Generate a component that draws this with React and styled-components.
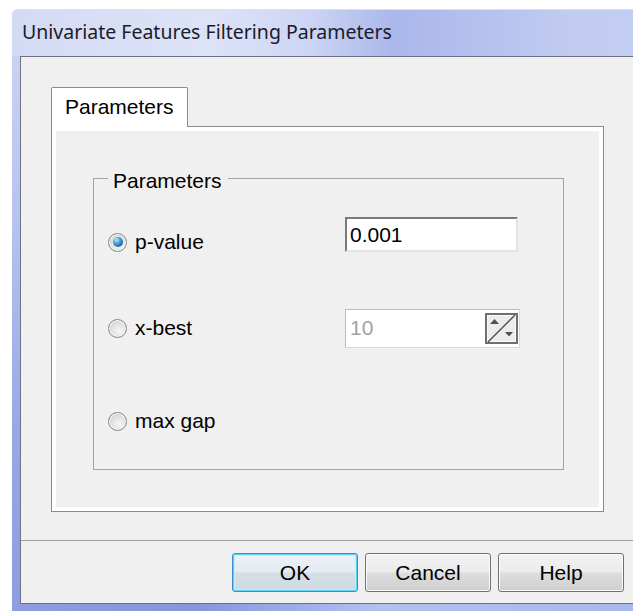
import React from 'react';
import styled, { createGlobalStyle } from 'styled-components';

const GlobalStyle = createGlobalStyle`
  html, body {
    margin: 0;
    padding: 0;
    background: #ffffff;
  }
  body {
    font-family: "Liberation Sans", Arial, sans-serif;
  }
  * {
    box-sizing: border-box;
  }
`;

const Desktop = styled.div`
  width: 633px;
  height: 611px;
  overflow: hidden;
  padding: 9px 0 0 12px;
  background: #ffffff;
`;

const Window = styled.div`
  width: 660px;
  height: 602px;
  display: flex;
  flex-direction: column;
  border-top-left-radius: 6px;
  background:
    linear-gradient(90deg, #8d9de0 0%, #8696dd 28%, #b3bfee 55%, #a9b6eb 100%) bottom / 100% 8px no-repeat,
    linear-gradient(180deg, #cfd7f3 0%, #b7c2ef 35%, #98a8e4 70%, #8c9de0 100%);
`;

const TitleBar = styled.div`
  flex: none;
  height: 47px;
  display: flex;
  align-items: center;
  padding: 0 0 3px 10px;
  border-top-left-radius: 6px;
  border-top: 1px solid #d9dff5;
  background: linear-gradient(90deg, #d3dbf4 0%, #dde3f7 30%, #ccd5f4 45%, #aab7ea 58%, #b4c0ee 70%, #c2ccf1 85%, #c4cef2 100%);
  color: #1b1b2b;
  font-family: "Noto Sans", "Open Sans", sans-serif;
  font-size: 19.5px;
`;

const Frame = styled.div`
  flex: 1;
  display: flex;
  padding: 0 0 7px 8px;
`;

const Client = styled.div`
  flex: 1;
  display: flex;
  flex-direction: column;
  background: #f0f0f0;
  border: 1px solid #6b7385;
  border-right: none;
`;

const TabArea = styled.div`
  padding: 30px 0 0 30px;
`;

const TabStrip = styled.div`
  display: flex;
`;

const Tab = styled.div`
  position: relative;
  z-index: 1;
  height: 40px;
  margin-bottom: -1px;
  padding: 0 13px;
  line-height: 38px;
  font-size: 21px;
  color: #000;
  background: #ffffff;
  border: 1px solid #898c95;
  border-bottom: none;
  border-radius: 2px 2px 0 0;
`;

const Panel = styled.div`
  width: 553px;
  height: 386px;
  padding: 4px;
  background: #ffffff;
  border: 1px solid #898c95;
`;

const Page = styled.div`
  height: 100%;
  padding: 33px 0 0 37px;
  background: #f0f0f0;
`;

const GroupBox = styled.fieldset`
  width: 471px;
  height: 306px;
  margin: 0;
  padding: 0 0 0 14px;
  border: 1px solid #a3a3a3;
  min-width: 0;
`;

const Legend = styled.legend`
  padding: 6px 6px 0 5px;
  line-height: 22px;
  font-size: 21px;
  color: #000;
`;

const Row = styled.div`
  display: flex;
  align-items: center;
  height: 40px;
  margin-top: ${p => p.$gap}px;
`;

const Choice = styled.label`
  width: 237px;
  display: flex;
  align-items: center;
  gap: 8px;
  font-size: 21px;
  color: #000;
`;

const Radio = styled.span`
  position: relative;
  width: 19px;
  height: 19px;
  flex: none;
  border-radius: 50%;
  border: 1px solid #85878a;
  background: radial-gradient(circle at 60% 65%, #f6f6f6 0%, #dedede 55%, #c2c2c2 100%);
  box-shadow: inset 0 0 0 1px #f8f8f8;

  &::after {
    content: '';
    display: ${p => (p.$checked ? 'block' : 'none')};
    position: absolute;
    left: 3.5px;
    top: 3.5px;
    width: 10px;
    height: 10px;
    border-radius: 50%;
    background: radial-gradient(circle at 35% 30%, #bfe8ff 0%, #49a6e0 35%, #1c5f9c 75%, #16426f 100%);
  }
`;

const TextBox = styled.div`
  align-self: flex-start;
  margin-top: -5px;
  width: 173px;
  height: 35px;
  padding-left: 3px;
  display: flex;
  align-items: center;
  font-size: 21px;
  color: #000;
  background: #ffffff;
  border: 2px solid;
  border-color: #7a7a7a #e3e3e3 #e3e3e3 #7a7a7a;
`;

const SpinBox = styled.div`
  width: 175px;
  height: 39px;
  display: flex;
  align-items: center;
  justify-content: space-between;
  padding: 0 1px 0 4px;
  font-size: 21px;
  color: #a3a3a3;
  background: #ffffff;
  border: 1px solid;
  border-color: #bcbcbc #d8d8d8 #d8d8d8 #bcbcbc;
`;

const Footer = styled.div`
  margin-top: auto;
  height: 63px;
  display: flex;
  gap: 7px;
  padding: 12px 0 0 211px;
  border-top: 1px solid #a0a0a0;
`;

const Button = styled.button`
  width: 126px;
  height: 39px;
  padding: 0;
  font-family: "Liberation Sans", Arial, sans-serif;
  font-size: 21px;
  color: #000;
  border-radius: 3px;
  border: 1px solid ${p => (p.$default ? '#3c8fc6' : '#707070')};
  background: ${p =>
    p.$default
      ? 'linear-gradient(180deg, #edf2f6 0%, #e4ebf1 48%, #d5dfe7 52%, #cfd9e2 100%)'
      : 'linear-gradient(180deg, #f3f3f3 0%, #ebebeb 48%, #dddddd 52%, #cfcfcf 100%)'};
  box-shadow: ${p =>
    p.$default ? 'inset 0 0 0 1px #5fd0f5, inset 0 0 0 2px #c6ecfa' : 'inset 0 0 0 1px #fbfbfb'};
`;

const SpinArrows = () => (
  <svg width="33" height="31" viewBox="0 0 33 31">
    <rect x="1" y="1" width="31" height="29" fill="#ececec" stroke="#6f6f6f" strokeWidth="2" />
    <rect x="2.5" y="2.5" width="28" height="26" fill="none" stroke="#fafafa" strokeWidth="1" />
    <line x1="3" y1="29" x2="30" y2="2" stroke="#505050" strokeWidth="1.4" />
    <polygon points="5,11 9.5,6 14,11" fill="#505050" />
    <polygon points="20,19 28,19 24,23.5" fill="#505050" />
  </svg>
);

const App = () => (
  <Desktop>
    <GlobalStyle />
    <Window>
      <TitleBar>Univariate Features Filtering Parameters</TitleBar>
      <Frame>
        <Client>
          <TabArea>
            <TabStrip>
              <Tab>Parameters</Tab>
            </TabStrip>
            <Panel>
              <Page>
                <GroupBox>
                  <Legend>Parameters</Legend>
                  <Row $gap={30}>
                    <Choice>
                      <Radio $checked />
                      p-value
                    </Choice>
                    <TextBox>0.001</TextBox>
                  </Row>
                  <Row $gap={46}>
                    <Choice>
                      <Radio />
                      x-best
                    </Choice>
                    <SpinBox>
                      10
                      <SpinArrows />
                    </SpinBox>
                  </Row>
                  <Row $gap={53}>
                    <Choice>
                      <Radio />
                      max gap
                    </Choice>
                  </Row>
                </GroupBox>
              </Page>
            </Panel>
          </TabArea>
          <Footer>
            <Button $default>OK</Button>
            <Button>Cancel</Button>
            <Button>Help</Button>
          </Footer>
        </Client>
      </Frame>
    </Window>
  </Desktop>
);

export default App;
